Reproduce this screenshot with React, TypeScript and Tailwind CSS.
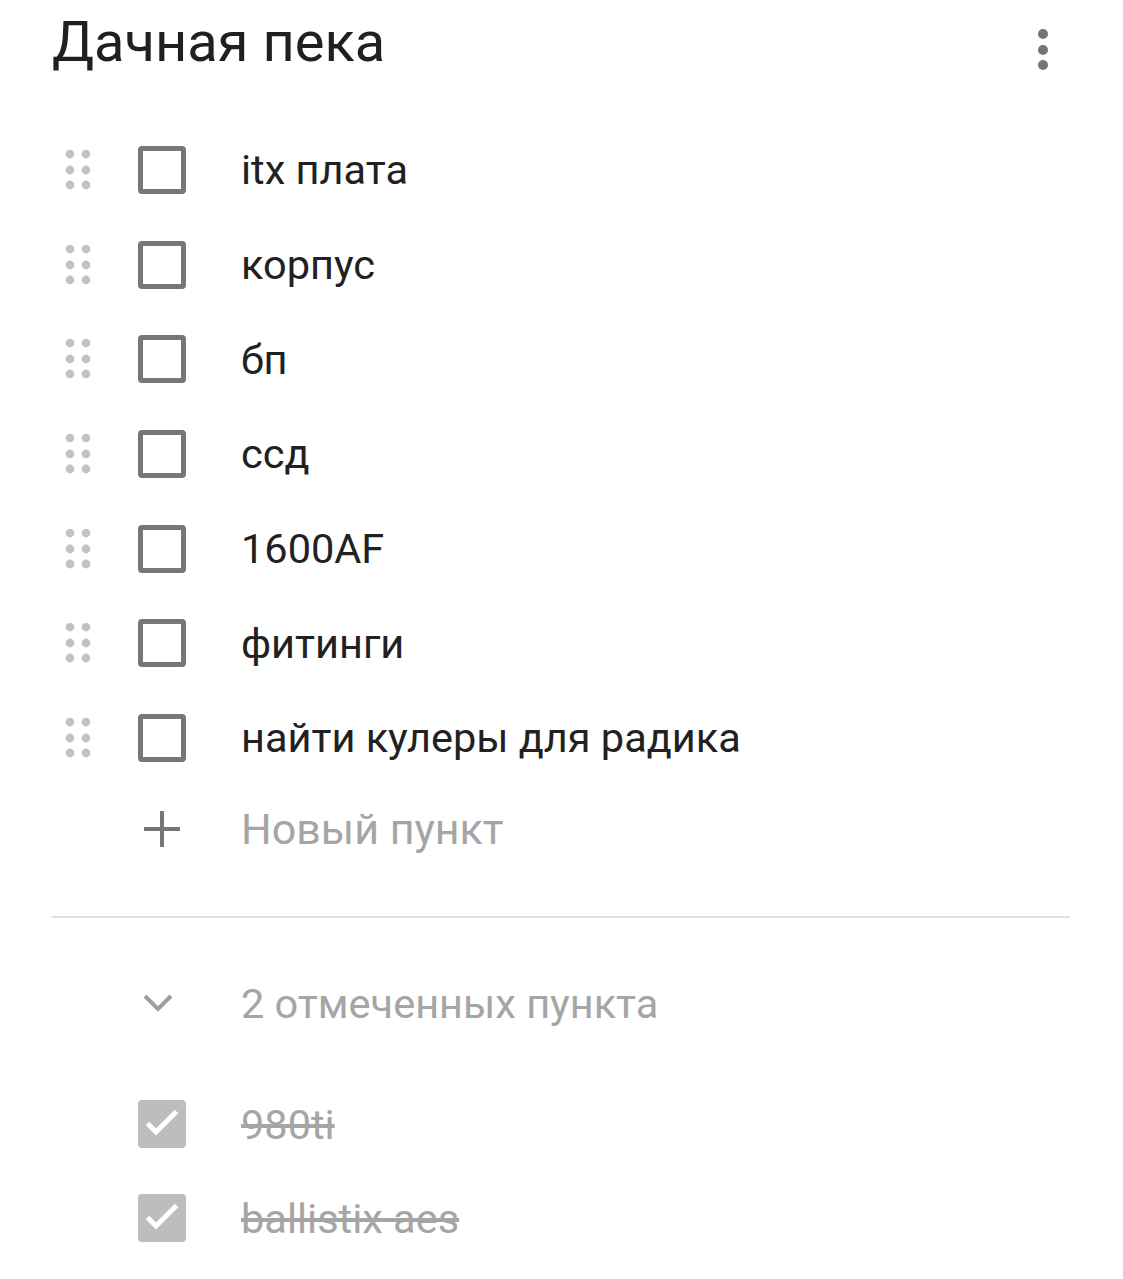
import React from 'react';

const OPEN_ITEMS = ['itx плата', 'корпус', 'бп', 'ссд', '1600AF', 'фитинги', 'найти кулеры для радика'];
const DONE_ITEMS = ['980ti', 'ballistix aes'];

const DragHandle = () => (
  <svg width="28" height="40" viewBox="0 0 28 40" className="shrink-0">
    {[4, 20, 35].map(cy =>
      [5, 21].map(cx => <circle key={`${cx}-${cy}`} cx={cx} cy={cy} r="4.4" fill="#c2c2c2" />),
    )}
  </svg>
);

const EmptyBox = () => (
  <div className="w-[48px] h-[48px] rounded-[4px] border-[5px] border-[#777777] shrink-0" />
);

const CheckedBox = () => (
  <div className="w-[48px] h-[48px] rounded-[4px] bg-[#bdbdbd] shrink-0">
    <svg width="48" height="48" viewBox="0 0 48 48">
      <path d="M9.5 23.5l8.5 8.5L38.5 11.5" fill="none" stroke="#ffffff" strokeWidth="5" />
    </svg>
  </div>
);

export default function App() {
  return (
    <div
      className="w-[1123px] h-[1279px] bg-white overflow-hidden text-[#212121]"
      style={{ fontFamily: 'Roboto, "Noto Sans", sans-serif' }}
    >
      <header className="h-[122.67px] flex items-start justify-between pl-[52px] pr-[74px]">
        <h1 className="text-[56px] leading-none font-normal mt-[14px] text-[#202020]">Дачная пека</h1>
        <svg width="12" height="44" viewBox="0 0 12 44" className="mt-[28px]">
          <circle cx="6" cy="6" r="5" fill="#757575" />
          <circle cx="6" cy="22" r="5" fill="#757575" />
          <circle cx="6" cy="37" r="5" fill="#757575" />
        </svg>
      </header>

      <ul>
        {OPEN_ITEMS.map(item => (
          <li key={item} className="h-[94.67px] flex items-center">
            <div className="w-[138px] pl-[65px] flex items-center">
              <DragHandle />
            </div>
            <EmptyBox />
            <span className="ml-[55px] text-[41.5px] leading-none">{item}</span>
          </li>
        ))}
      </ul>

      <div className="h-[88px] flex items-center">
        <div className="w-[241px] pl-[143px] flex items-center">
          <svg width="38" height="38" viewBox="0 0 38 38">
            <path d="M19 1v36M1 19h36" stroke="#767676" strokeWidth="4" />
          </svg>
        </div>
        <span className="text-[43px] leading-none text-[#a5a5a5]">Новый пункт</span>
      </div>

      <div className="mt-[43px] mx-[52px] w-[1018px] h-[2px] bg-[#e0e0e0]" />

      <div className="mt-[40px] h-[90px] flex items-center">
        <div className="w-[241px] pl-[143px] flex items-center">
          <svg width="30" height="20" viewBox="0 0 30 20">
            <path d="M2 3l13 13L28 3" fill="none" stroke="#9e9e9e" strokeWidth="4" />
          </svg>
        </div>
        <span className="text-[41.5px] leading-none text-[#a5a5a5]">2 отмеченных пункта</span>
      </div>

      <ul className="mt-[29px]">
        {DONE_ITEMS.map(item => (
          <li key={item} className="h-[94px] flex items-center">
            <div className="w-[138px]" />
            <CheckedBox />
            <span className="ml-[55px] text-[41.5px] leading-none text-[#a5a5a5] line-through decoration-[#a5a5a5]">
              {item}
            </span>
          </li>
        ))}
      </ul>
    </div>
  );
}
